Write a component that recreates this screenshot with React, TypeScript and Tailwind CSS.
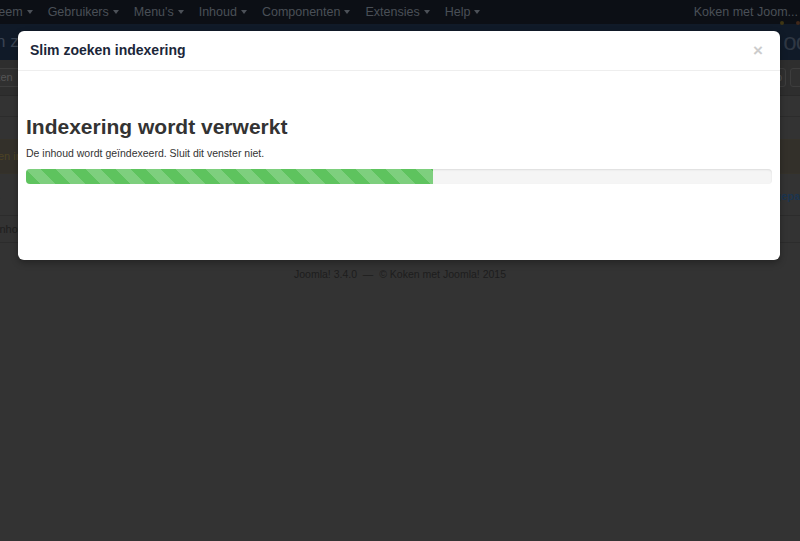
import React from "react";

const font = { fontFamily: '"Liberation Sans", Arial, sans-serif' };

function Caret() {
  return (
    <span className="ml-1 inline-block align-middle border-x-[3.5px] border-t-[4px] border-x-transparent border-t-[#4c5158]" />
  );
}

export default function App() {
  const menu = ["Systeem", "Gebruikers", "Menu's", "Inhoud", "Componenten", "Extensies", "Help"];

  return (
    <div className="relative w-[800px] h-[541px] overflow-hidden bg-[#333333]" style={font}>
      {/* Dimmed admin page behind the modal */}
      <div className="flex flex-col">
        <div className="h-[24px] bg-[#0c0f15] flex items-center justify-between text-[12.5px] text-[#4a4f57]">
          <div className="flex items-center gap-[15px] -ml-[26px]">
            {menu.map((m) => (
              <span key={m} className="flex items-center">
                {m}
                <Caret />
              </span>
            ))}
          </div>
          <span className="pr-[2px] whitespace-nowrap">Koken met Joom...</span>
        </div>

        <div className="h-[36px] bg-[#101a28] flex items-center justify-between">
          <span className="-ml-[4px] text-[17px] text-[#3a4453]">n zoeken</span>
          <div className="relative -mr-[8px] text-[24px] text-[#2f3743] tracking-[-1px]">
            oo
            <span className="absolute -top-[3px] left-[-3px] w-[4px] h-[4px] rounded-full bg-[#3f3614]" />
            <span className="absolute -top-[3px] left-[13px] w-[4px] h-[4px] rounded-full bg-[#40281a]" />
          </div>
        </div>

        <div className="h-[36px] bg-[#2e2e2e] flex items-center justify-between border-b border-[#292929]">
          <div className="-ml-[30px] h-[19px] px-[8px] flex items-center rounded-[3px] border border-[#3d3d3d] bg-[#303030] text-[11px] text-[#555]">
            Sluiten
          </div>
          <div className="flex gap-[4px] -mr-[14px]">
            <div className="w-[24px] h-[19px] rounded-[3px] border border-[#3d3d3d] bg-[#303030] text-[11px] text-[#555] flex items-center justify-end pr-[3px]">
              p
            </div>
            <div className="w-[24px] h-[19px] rounded-[3px] border border-[#3d3d3d] bg-[#303030]" />
          </div>
        </div>

        <div className="h-[21px] border-b border-[#2c2c2c]" />
        <div className="h-[22px]" />
        <div className="h-[35px] bg-[#33302a] border-y border-[#35322a] flex items-center text-[11px] text-[#4d4324]">
          <span className="-ml-[2px]">en indexeren</span>
        </div>
        <div className="h-[42px] border-b border-[#2c2c2c] flex items-center justify-between pt-[4px] text-[11px] font-bold text-[#1b3550]">
          <span className="-ml-[6px]">s</span>
          <span className="-mr-[10px]">gepast</span>
        </div>
        <div className="h-[27px] border-b border-[#2c2c2c] flex items-center text-[11px] text-[#1e1e1e]">
          <span className="-ml-[3px]">inhoud</span>
        </div>

        <div className="mt-[24px] text-center text-[10.5px] text-[#1d1d1d]">
          Joomla! 3.4.0 &nbsp;— &nbsp;© Koken met Joomla! 2015
        </div>
      </div>

      {/* Modal */}
      <div className="absolute left-[18px] top-[31px] w-[762px] bg-white rounded-[6px] shadow-[0_3px_7px_rgba(0,0,0,0.3)]">
        <div className="h-[40px] border-b border-[#eeeeee] flex items-center justify-between pl-[12px] pr-[17px]">
          <h3 className="text-[14px] font-bold text-[#1b2639]">Slim zoeken indexering</h3>
          <span className="text-[17px] font-bold text-[#cccccc] leading-none">×</span>
        </div>

        <div className="px-[8px] pt-[43px] pb-[76px]">
          <h1 className="text-[21px] leading-[25px] font-bold text-[#333333]">Indexering wordt verwerkt</h1>
          <p className="mt-[7px] text-[10.5px] leading-[15px] text-[#333333]">
            De inhoud wordt geïndexeerd. Sluit dit venster niet.
          </p>
          <div className="mt-[8px] h-[15px] rounded-[4px] bg-[#f5f5f5] shadow-[inset_0_1px_2px_rgba(0,0,0,0.1)] overflow-hidden">
            <div
              className="h-full bg-[#5ec35e] bg-[linear-gradient(45deg,rgba(255,255,255,.2)_25%,transparent_25%,transparent_50%,rgba(255,255,255,.2)_50%,rgba(255,255,255,.2)_75%,transparent_75%,transparent)] bg-[length:30px_30px]"
              style={{ width: "54.6%" }}
            />
          </div>
        </div>
      </div>
    </div>
  );
}
